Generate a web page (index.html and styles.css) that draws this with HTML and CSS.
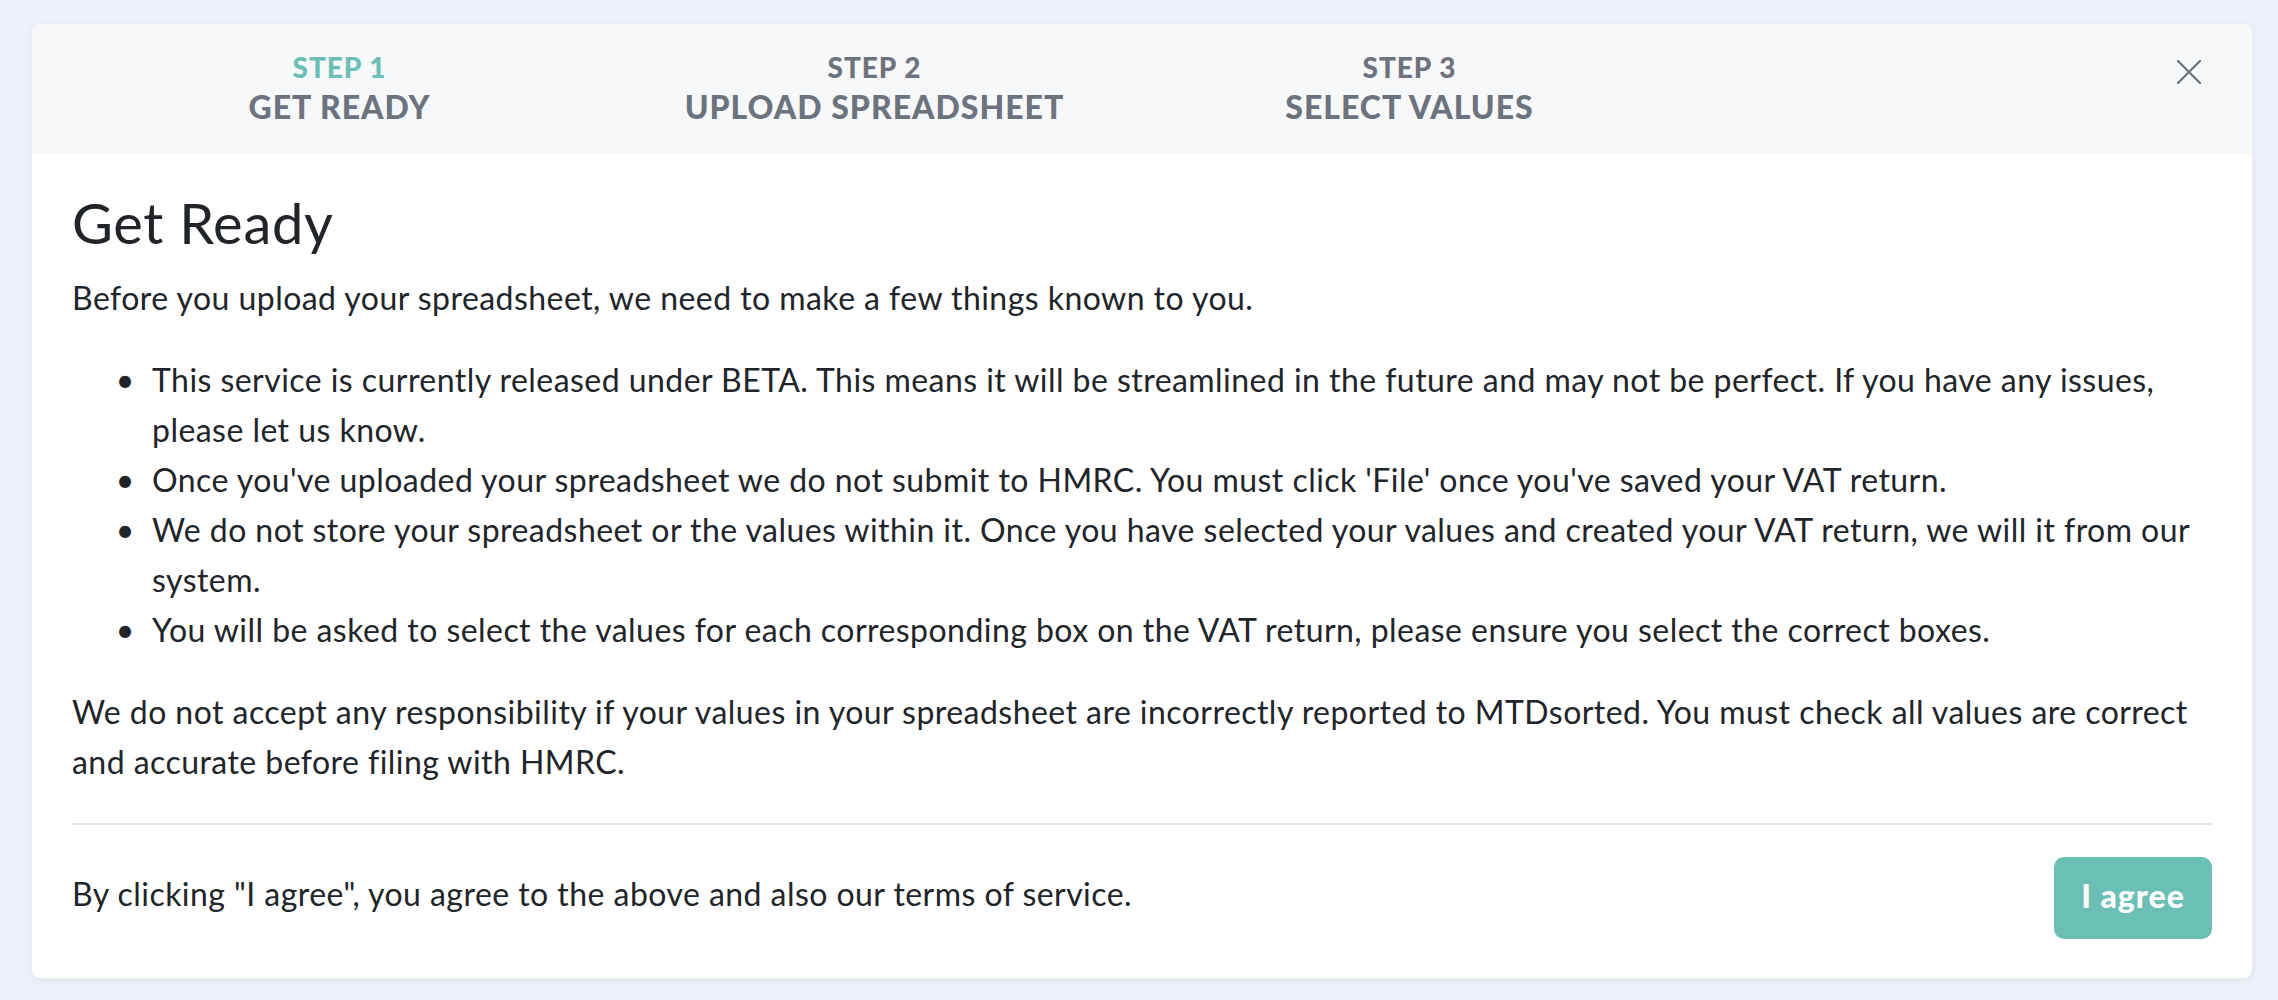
FILE: index.html
```html
<!DOCTYPE html>
<html lang="en">
<head>
<meta charset="utf-8">
<title>Get Ready</title>
<link rel="stylesheet" href="styles.css">
</head>
<body>
<div class="page">
  <div class="card">
    <div class="steps">
      <div class="step active">
        <div class="step-num">STEP 1</div>
        <div class="step-name">GET READY</div>
      </div>
      <div class="step">
        <div class="step-num">STEP 2</div>
        <div class="step-name">UPLOAD SPREADSHEET</div>
      </div>
      <div class="step">
        <div class="step-num">STEP 3</div>
        <div class="step-name">SELECT VALUES</div>
      </div>
      <div class="step-close">
        <button class="close" aria-label="Close">
          <svg width="24" height="24" viewBox="0 0 24 24"><path d="M1 1 L23 23 M23 1 L1 23" stroke="#6c737d" stroke-width="2.2" stroke-linecap="round" fill="none"/></svg>
        </button>
      </div>
    </div>
    <div class="body">
      <h3 class="title">Get Ready</h3>
      <p>Before you upload your spreadsheet, we need to make a few things known to you.</p>
      <ul class="points">
        <li>This service is currently released under BETA. This means it will be streamlined in the future and may not be perfect. If you have any issues, please let us know.</li>
        <li>Once you've uploaded your spreadsheet we do not submit to HMRC. You must click 'File' once you've saved your VAT return.</li>
        <li>We do not store your spreadsheet or the values within it. Once you have selected your values and created your VAT return, we will it from our system.</li>
        <li>You will be asked to select the values for each corresponding box on the VAT return, please ensure you select the correct boxes.</li>
      </ul>
      <p class="last">We do not accept any responsibility if your values in your spreadsheet are incorrectly reported to MTDsorted. You must check all values are correct and accurate before filing with HMRC.</p>
      <hr class="divider">
      <div class="footer">
        <p class="footer-text">By clicking "I agree", you agree to the above and also our terms of service.</p>
        <button class="agree">I agree</button>
      </div>
    </div>
  </div>
</div>
</body>
</html>
```

FILE: styles.css
```css
html, body {
  margin: 0;
  padding: 0;
  background: #eef1f8;
}
body {
  font-family: Lato, "Noto Sans", sans-serif;
  color: #212529;
}
.page {
  padding: 24px 26px 23px 32px;
}
.card {
  background: #ffffff;
  border-radius: 8px;
  box-shadow: 0 2px 8px rgba(40, 50, 80, 0.08);
  overflow: hidden;
}
.steps {
  background: #f7f8fa;
  display: grid;
  grid-template-columns: repeat(4, 1fr);
  padding: 22px 40px 28px 40px;
}
.step {
  text-align: center;
  font-weight: 900;
  color: #6c737d;
  letter-spacing: 1px;
}
.step-num {
  font-size: 28px;
  line-height: 42px;
}
.step-name {
  font-size: 32px;
  line-height: 38px;
}
.step.active .step-num {
  color: #6cbfb4;
}
.step-close {
  display: flex;
  justify-content: flex-end;
  align-items: flex-start;
  padding-right: 11px;
}
.close {
  border: 0;
  background: transparent;
  padding: 0;
  margin-top: 14px;
  width: 24px;
  height: 24px;
  cursor: pointer;
}
.close svg {
  display: block;
}
.body {
  padding: 41px 40px 39px 40px;
  font-size: 32px;
  line-height: 50px;
  letter-spacing: 0.45px;
}
.title {
  font-size: 56px;
  line-height: 56px;
  font-weight: 400;
  letter-spacing: 0.7px;
  margin: 0 0 22px 0;
}
.body p {
  margin: 0 0 32px 0;
}
.points {
  margin: 0 0 32px 0;
  padding-left: 80px;
}
.points li::marker {
  content: "\2022\00a0\00a0";
}
.body p.last {
  margin-bottom: 0;
}
.divider {
  border: 0;
  border-top: 2px solid #e6e6e6;
  margin: 36px 0 32px 0;
}
.footer {
  display: flex;
  justify-content: space-between;
  align-items: center;
}
.body p.footer-text {
  margin: 0 0 8px 0;
}
.agree {
  width: 158px;
  height: 82px;
  border: 0;
  border-radius: 10px;
  background: #6cbfb4;
  color: #ffffff;
  font-family: Lato, "Noto Sans", sans-serif;
  font-weight: 900;
  font-size: 32px;
  letter-spacing: 1px;
  padding: 0 0 6px 0;
  cursor: pointer;
}
```
